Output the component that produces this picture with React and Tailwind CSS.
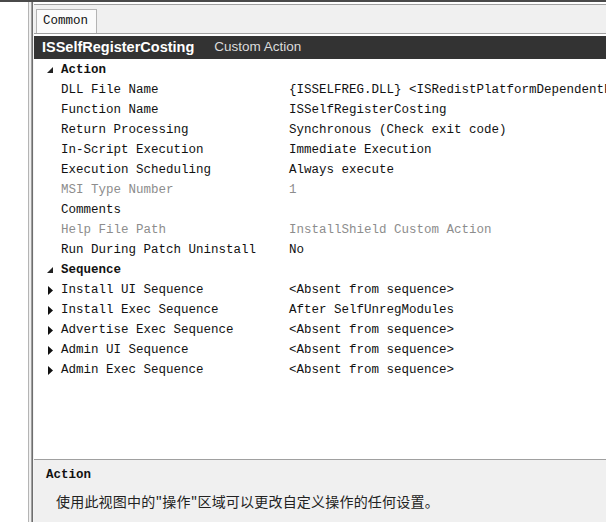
const mono = "font-['Liberation_Mono',monospace] text-[12.5px]";

const actionRows = [
  { label: 'DLL File Name', value: '{ISSELFREG.DLL} <ISRedistPlatformDependentFolder>' },
  { label: 'Function Name', value: 'ISSelfRegisterCosting' },
  { label: 'Return Processing', value: 'Synchronous (Check exit code)' },
  { label: 'In-Script Execution', value: 'Immediate Execution' },
  { label: 'Execution Scheduling', value: 'Always execute' },
  { label: 'MSI Type Number', value: '1', disabled: true },
  { label: 'Comments', value: '' },
  { label: 'Help File Path', value: 'InstallShield Custom Action', disabled: true },
  { label: 'Run During Patch Uninstall', value: 'No' },
];

const sequenceRows = [
  { label: 'Install UI Sequence', value: '<Absent from sequence>' },
  { label: 'Install Exec Sequence', value: 'After SelfUnregModules' },
  { label: 'Advertise Exec Sequence', value: '<Absent from sequence>' },
  { label: 'Admin UI Sequence', value: '<Absent from sequence>' },
  { label: 'Admin Exec Sequence', value: '<Absent from sequence>' },
];

function Expanded() {
  return (
    <svg width="6" height="6" viewBox="0 0 6 6" className="block">
      <polygon points="6,0 6,6 0,6" fill="#222" />
    </svg>
  );
}

function Collapsed() {
  return (
    <svg width="5" height="9" viewBox="0 0 5 9" className="block">
      <polygon points="0,0 5,4.5 0,9" fill="#111" />
    </svg>
  );
}

function Category({ title }) {
  return (
    <div className="flex h-[20px] items-center">
      <div className="w-[27px] shrink-0 pl-[13px]">
        <Expanded />
      </div>
      <span className="font-bold text-[#111]">{title}</span>
    </div>
  );
}

function Row({ label, value, disabled, collapsible }) {
  const color = disabled ? 'text-[#8d8d8d]' : 'text-[#111]';
  return (
    <div className="flex h-[20px] items-center whitespace-nowrap">
      <div className="w-[27px] shrink-0 pl-[14px]">{collapsible && <Collapsed />}</div>
      <span className={`w-[228px] shrink-0 ${color}`}>{label}</span>
      <span className={color}>{value}</span>
    </div>
  );
}

export default function App() {
  return (
    <div className="w-[606px] h-[522px] flex flex-col overflow-hidden bg-white">
      <div className="h-[2px] bg-[#4a4a4a] shrink-0" />
      <div className="flex flex-1 min-h-0">
        <div className="w-[28px] bg-white" />
        <div className="w-px bg-[#b4b4b4]" />
        <div className="w-[2px] bg-[#f0f0f0]" />
        <div className="w-px bg-[#a0a0a0]" />
        <div className="w-px bg-[#6e6e6e]" />
        <div className="w-px bg-[#f4f4f4]" />

        <div className={`flex-1 flex flex-col min-w-0 ${mono}`}>
          {/* Tabs */}
          <div className="h-[2px] bg-white" />
          <div className="h-px bg-[#a0a0a0]" />
          <div className="h-[28px] bg-[#f0f0f0] flex items-end pl-[2px]">
            <div className="h-[24px] w-[61px] bg-[#fbfbfb] border border-b-0 border-[#b4b4b4] flex items-center pl-[6px] text-[#111]">
              Common
            </div>
          </div>
          <div className="h-px bg-[#a0a0a0]" />
          <div className="h-[2px] bg-white" />

          {/* Header */}
          <div className="h-[23px] bg-[#333333] flex items-center pl-[8px] whitespace-nowrap font-['Liberation_Sans',sans-serif]">
            <span className="text-white font-bold text-[14.5px]">ISSelfRegisterCosting</span>
            <span className="ml-[20px] text-[#dcdcdc] text-[13.5px]">Custom Action</span>
          </div>

          {/* Grid */}
          <div className="flex-1 min-h-0 bg-white overflow-hidden pt-px">
            <Category title="Action" />
            {actionRows.map((r) => (
              <Row key={r.label} {...r} />
            ))}
            <Category title="Sequence" />
            {sequenceRows.map((r) => (
              <Row key={r.label} {...r} collapsible />
            ))}
          </div>

          {/* Description */}
          <div className="h-px bg-[#a0a0a0]" />
          <div className="h-[62px] shrink-0 bg-[#f0f0f0] pl-[12px] pt-[6px]">
            <div className="font-bold text-[#111] h-[18px] leading-[18px]">Action</div>
            <div className="mt-[7px] pl-[10px] h-[20px] leading-[20px] text-[14px] text-[#222] font-['Noto_Sans_CJK_SC',sans-serif] tracking-[0.2px]">
              使用此视图中的"操作"区域可以更改自定义操作的任何设置。
            </div>
          </div>
        </div>
      </div>
    </div>
  );
}
